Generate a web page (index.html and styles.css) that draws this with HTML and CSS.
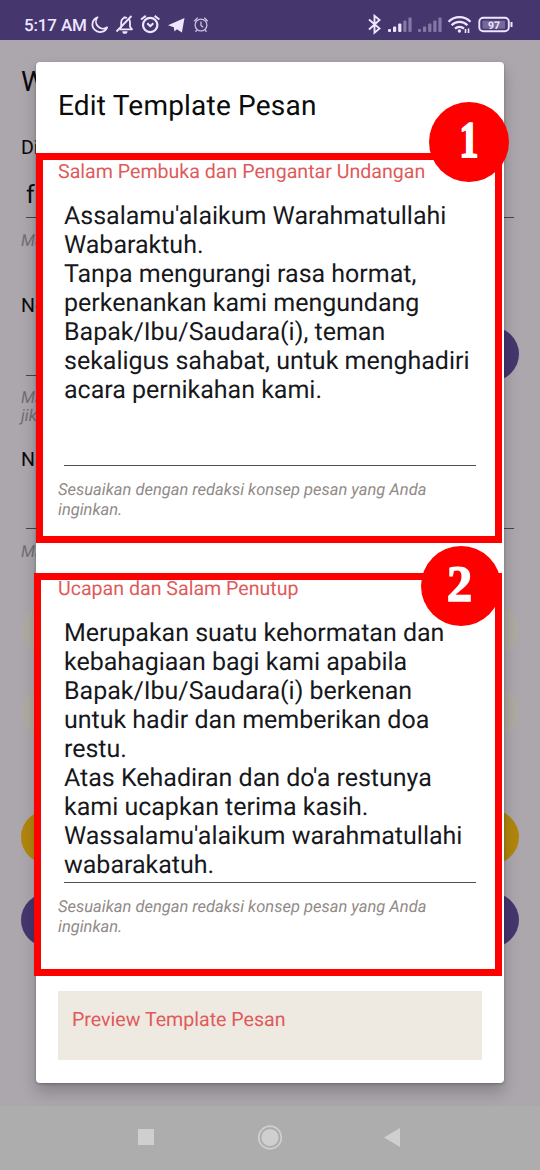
FILE: index.html
```html
<!DOCTYPE html>
<html lang="id">
<head>
<meta charset="utf-8">
<title>Edit Template Pesan</title>
<link rel="stylesheet" href="styles.css">
</head>
<body>
<div class="screen">
  <header class="status">
    <span class="clock">5:17 AM</span>
    <svg class="status-left" width="120" height="24" viewBox="90 12 120 24" fill="none" stroke="#eee6ff" stroke-width="1.8" stroke-linejoin="round">
      <path d="M97.500 17.300a7.600 7.600 0 1 0 9.600 10 7 7 0 0 1-9.600-10z"/>
      <path d="M119.500 29.300h12.500l-2-2.600v-4.500a4.600 4.600 0 0 0-1.500-3.500M119.500 29.300l1.700-2.600v-4.500a4.500 4.500 0 0 1 5.800-4.300M124.500 16.500v1.500"/>
      <path d="M116.500 31.500L131.500 16"/><path d="M122.300 31.200a2.600 2.600 0 0 0 5.200 0z" fill="#eee6ff" stroke="none"/>
      <circle cx="150.200" cy="25" r="7.200" stroke-width="2.200"/><path stroke-width="2" d="M147.300 23.300l3 3 3-3M141 19.500l4.800-3.600M159.400 19.500l-4.800-3.600"/>
      <path d="M168 25.200L184.500 18l-2.600 14.500-5-3.300-2.500 2.400-.6-4.300z" fill="#eee6ff" stroke="none"/>
      <g stroke="#cbbfe0" stroke-width="1.300"><circle cx="201" cy="25" r="5.900"/><path d="M201 21.500v4l2.200 1.700M194.200 21.200l3.500-3.500M207.800 21.200l-3.500-3.500M197 30l-1.500 1.700M205 30l1.500 1.700"/></g>
    </svg>
    <svg class="status-right" width="150" height="24" viewBox="365 12 150 24" fill="none" stroke="#eee6ff" stroke-width="1.900">
      <path d="M369 19.500l10.500 9-5 4.300V15.800l5 4.200L369 29.500"/>
      <g stroke="none" fill="#eee6ff"><rect x="388" y="29" width="3" height="3" rx="1"/><rect x="393" y="26.500" width="3.200" height="5.500" rx="1"/><rect x="398.200" y="23.500" width="3.200" height="8.500" rx="1"/></g>
      <g stroke="none" fill="#8678a5"><rect x="403.300" y="20.500" width="3.200" height="11.500" rx="1"/><rect x="408.400" y="17.500" width="3.200" height="14.500" rx="1"/><rect x="418" y="29" width="3" height="3" rx="1"/><rect x="423" y="26.500" width="3.200" height="5.500" rx="1"/><rect x="428.200" y="23.500" width="3.200" height="8.500" rx="1"/><rect x="433.300" y="20.500" width="3.200" height="11.500" rx="1"/><rect x="438.400" y="17.500" width="3.200" height="14.500" rx="1"/></g>
      <g stroke-width="2.200"><path d="M448.500 21.800a15.500 15.500 0 0 1 22 0M451.600 25.300a11 11 0 0 1 15.800 0M455 28.600a6.500 6.500 0 0 1 9 0"/></g>
      <circle cx="459.400" cy="31" r="1.700" fill="#eee6ff" stroke="none"/><path d="M465.500 33v-4M468.500 28.500v4.500" stroke-width="1.600"/>
      <rect x="479.300" y="17.700" width="29.500" height="13.600" rx="4"/><rect x="482.500" y="20.700" width="22.500" height="8" fill="#75689a" stroke="none"/><path d="M511.500 22v5" stroke-width="2"/>
      <text x="494" y="28.500" class="battery" text-anchor="middle">97</text>
    </svg>
  </header>

  <main class="page">
    <h1 class="page-title">Wh</h1>
    <section class="row row-first"><label>Dit</label><div class="value">f</div><small>Ma</small></section>
    <section class="row row-second"><label>No</label><div class="input-line"><div class="value"></div><i class="round"></i></div><small>Mas<br>jika</small></section>
    <section class="row row-third"><label>Na</label><div class="value"></div><small>Ma</small></section>
    <div class="pill pale"></div>
    <div class="pill pale"></div>
    <div class="pill gold"></div>
    <div class="pill violet"></div>
  </main>

  <nav class="navbar">
    <svg width="540" height="64" viewBox="0 0 540 64">
      <rect x="138" y="23" width="16" height="16" fill="#cfcfcf"/>
      <circle cx="270" cy="31.500" r="11.300" fill="none" stroke="#cfcfcf" stroke-width="1.700"/><circle cx="270" cy="31.500" r="8.600" fill="#cfcfcf"/>
      <path d="M384 31.500l16-9.500v19z" fill="#cfcfcf"/>
    </svg>
  </nav>

  <div class="dialog">
    <h2 class="dialog-title">Edit Template Pesan</h2>
    <section class="field opening">
      <h3>Salam Pembuka dan Pengantar Undangan</h3>
      <p class="message">Assalamu'alaikum Warahmatullahi<br>Wabaraktuh.<br>Tanpa mengurangi rasa hormat,<br>perkenankan kami mengundang<br>Bapak/Ibu/Saudara(i), teman<br>sekaligus sahabat, untuk menghadiri<br>acara pernikahan kami.</p>
      <p class="hint">Sesuaikan dengan redaksi konsep pesan yang Anda<br>inginkan.</p>
    </section>
    <section class="field closing">
      <h3>Ucapan dan Salam Penutup</h3>
      <p class="message">Merupakan suatu kehormatan dan<br>kebahagiaan bagi kami apabila<br>Bapak/Ibu/Saudara(i) berkenan<br>untuk hadir dan memberikan doa<br>restu.<br>Atas Kehadiran dan do'a restunya<br>kami ucapkan terima kasih.<br>Wassalamu'alaikum warahmatullahi<br>wabarakatuh.</p>
      <p class="hint">Sesuaikan dengan redaksi konsep pesan yang Anda<br>inginkan.</p>
    </section>
    <div class="preview">Preview Template Pesan</div>
  </div>

  <div class="frame frame-one"></div>
  <div class="frame frame-two"></div>
  <div class="badge badge-one"><span>1</span></div>
  <div class="badge badge-two"><span>2</span></div>
</div>
</body>
</html>
```
FILE: styles.css
```css
* { box-sizing: border-box; margin: 0; padding: 0; }
body { font-family: Roboto, "Liberation Sans", sans-serif; text-rendering: geometricPrecision; }
.screen { position: relative; display: flex; flex-direction: column; width: 540px; height: 1170px; overflow: hidden; background: #aca7ad; }

.status { display: flex; justify-content: space-between; height: 40px; padding: 12px 25px 0 24px; background: #45366e; color: #eee6ff; }
.clock { width: 66px; font-size: 17px; font-weight: 500; line-height: 28px; letter-spacing: -.15px; white-space: nowrap; }
.status-right { margin-left: auto; }
.battery { font: 700 10.500px Roboto, sans-serif; fill: #eee6ff; stroke: none; }

.page { flex: 1; padding: 0 21px; color: #0c0a10; }
.page-title { height: 94px; padding-top: 24px; font-size: 28px; font-weight: 400; line-height: 36px; }
.row label { display: block; height: 28px; font-size: 19.600px; line-height: 28px; }
.row .value { height: 56px; margin: 0 5px; border-bottom: 1px solid #48434c; font-size: 25px; line-height: 67px; }
.row small { display: block; padding-top: 15px; font-size: 16.500px; font-style: italic; line-height: 18px; color: #736e74; }
.row-first { height: 158px; }
.row-second { height: 154px; }
.input-line { display: flex; align-items: flex-end; justify-content: space-between; height: 56px; }
.row-second .value { width: 420px; }
.row-second small { padding-top: 14px; }
.row-third { height: 159px; }
.row-third .value { height: 55px; }
.round { width: 54px; height: 54px; margin-bottom: -5px; border-radius: 50%; background: #45366e; }
.pill { height: 50px; border-radius: 27px; }
.pale { margin-bottom: 32px; background: #afaba3; }
.gold { height: 54px; margin-top: 73px; background: #b1860d; }
.violet { height: 54px; margin-top: 29px; background: #45366e; }
.navbar { height: 64px; background: #adadad; }

.dialog { position: absolute; left: 36px; top: 62px; width: 468px; height: 1020.500px; padding: 0 22px; border-radius: 4px; background: #fff; box-shadow: 0 9px 16px rgba(0, 0, 0, .22), 0 1px 3px rgba(0, 0, 0, .25); }
.dialog-title { height: 98px; padding-top: 27px; font-size: 28px; font-weight: 400; line-height: 34px; letter-spacing: .2px; color: #0b0b0b; white-space: nowrap; }
.field { height: 417px; }
.field h3 { height: 41px; font-size: 19.600px; font-weight: 400; line-height: 23px; color: #e05a5a; white-space: nowrap; }
.message { height: 265px; margin: 0 6px; padding-top: 1px; border-bottom: 1px solid #505050; font-size: 25px; line-height: 29px; letter-spacing: -.01px; color: #17181c; white-space: nowrap; }
.hint { padding-top: 15px; font-size: 16.500px; font-style: italic; line-height: 20px; color: #918a88; white-space: nowrap; }
.preview { height: 69px; margin-top: -3px; padding: 14px; background: #eee9e1; font-size: 19.600px; line-height: 29px; color: #e05a5a; white-space: nowrap; }

.frame { position: absolute; border: 7px solid #fe0000; }
.frame-one { left: 36px; top: 153px; width: 466px; height: 390px; }
.frame-two { left: 34px; top: 573px; width: 468px; height: 403px; }
.badge { position: absolute; width: 80px; height: 80px; border-radius: 50%; background: #fe0000; color: #fff; font: 700 51px/78px "Liberation Serif", serif; text-align: center; }
.badge span { display: block; }
.badge-one { left: 429px; top: 102px; }
.badge-one span { transform: scaleX(.74); -webkit-text-stroke: 2px #fff; }
.badge-two { left: 421px; top: 546px; }
.badge-two span { margin-left: -3px; -webkit-text-stroke: 1.4px #fff; }
```
